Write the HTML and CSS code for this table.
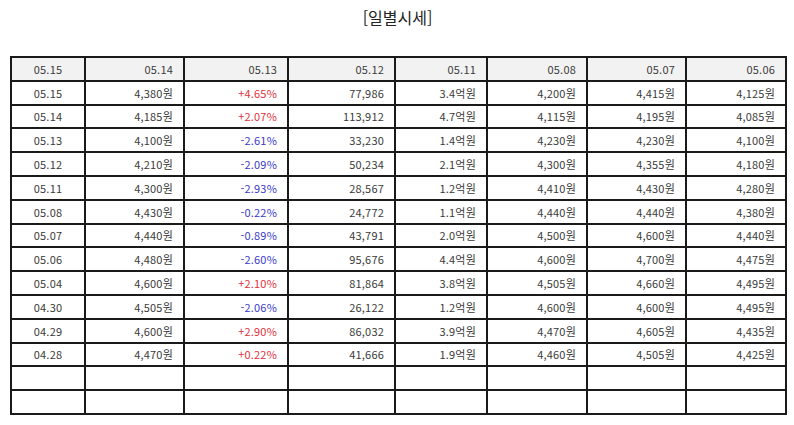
FILE: index.html
```html
<!DOCTYPE html>
<html lang="ko">
<head>
<meta charset="utf-8">
<link rel="stylesheet" href="styles.css">
</head>
<body>
<div class="page">
  <h1 class="title">[일별시세]</h1>
  <table class="grid">
    <colgroup>
      <col class="c1"><col class="c2"><col class="c3"><col class="c4"><col class="c5"><col class="c6"><col class="c7"><col class="c8">
    </colgroup>
    <thead>
      <tr><th class="date">05.15</th><th>05.14</th><th>05.13</th><th>05.12</th><th>05.11</th><th>05.08</th><th>05.07</th><th>05.06</th></tr>
    </thead>
    <tbody>
      <tr><td class="date">05.15</td><td>4,380원</td><td class="up">+4.65%</td><td>77,986</td><td>3.4억원</td><td>4,200원</td><td>4,415원</td><td>4,125원</td></tr>
      <tr><td class="date">05.14</td><td>4,185원</td><td class="up">+2.07%</td><td>113,912</td><td>4.7억원</td><td>4,115원</td><td>4,195원</td><td>4,085원</td></tr>
      <tr><td class="date">05.13</td><td>4,100원</td><td class="down">-2.61%</td><td>33,230</td><td>1.4억원</td><td>4,230원</td><td>4,230원</td><td>4,100원</td></tr>
      <tr><td class="date">05.12</td><td>4,210원</td><td class="down">-2.09%</td><td>50,234</td><td>2.1억원</td><td>4,300원</td><td>4,355원</td><td>4,180원</td></tr>
      <tr><td class="date">05.11</td><td>4,300원</td><td class="down">-2.93%</td><td>28,567</td><td>1.2억원</td><td>4,410원</td><td>4,430원</td><td>4,280원</td></tr>
      <tr><td class="date">05.08</td><td>4,430원</td><td class="down">-0.22%</td><td>24,772</td><td>1.1억원</td><td>4,440원</td><td>4,440원</td><td>4,380원</td></tr>
      <tr><td class="date">05.07</td><td>4,440원</td><td class="down">-0.89%</td><td>43,791</td><td>2.0억원</td><td>4,500원</td><td>4,600원</td><td>4,440원</td></tr>
      <tr><td class="date">05.06</td><td>4,480원</td><td class="down">-2.60%</td><td>95,676</td><td>4.4억원</td><td>4,600원</td><td>4,700원</td><td>4,475원</td></tr>
      <tr><td class="date">05.04</td><td>4,600원</td><td class="up">+2.10%</td><td>81,864</td><td>3.8억원</td><td>4,505원</td><td>4,660원</td><td>4,495원</td></tr>
      <tr><td class="date">04.30</td><td>4,505원</td><td class="down">-2.06%</td><td>26,122</td><td>1.2억원</td><td>4,600원</td><td>4,600원</td><td>4,495원</td></tr>
      <tr><td class="date">04.29</td><td>4,600원</td><td class="up">+2.90%</td><td>86,032</td><td>3.9억원</td><td>4,470원</td><td>4,605원</td><td>4,435원</td></tr>
      <tr><td class="date">04.28</td><td>4,470원</td><td class="up">+0.22%</td><td>41,666</td><td>1.9억원</td><td>4,460원</td><td>4,505원</td><td>4,425원</td></tr>
      <tr class="empty"><td></td><td></td><td></td><td></td><td></td><td></td><td></td><td></td></tr>
      <tr class="empty"><td></td><td></td><td></td><td></td><td></td><td></td><td></td><td></td></tr>
    </tbody>
  </table>
</div>
</body>
</html>
```

FILE: styles.css
```css
html, body {
  margin: 0;
  padding: 0;
  background: #fff;
}
.page {
  padding: 0 9px 0 10px;
  font-family: "Noto Sans CJK KR", "Noto Sans", sans-serif;
  color: #333;
}
.title {
  margin: 0;
  height: 56px;
  padding-top: 5px;
  box-sizing: border-box;
  text-align: center;
  font-size: 16px;
  font-weight: normal;
  line-height: 24px;
  color: #222;
}
.grid {
  width: 775px;
  border-collapse: collapse;
  table-layout: fixed;
  border: 2px solid #1a1a1a;
}
.c1 { width: 74px; }
.c2 { width: 99px; }
.c3 { width: 104px; }
.c4 { width: 107px; }
.c5 { width: 92px; }
.c6 { width: 100px; }
.c7 { width: 99px; }
.c8 { width: 100px; }
.grid th,
.grid td {
  border: 2px solid #1a1a1a;
  height: 21.8px;
  padding: 0 10px 0 0;
  font-size: 11px;
  font-weight: normal;
  text-align: right;
  line-height: 20px;
  letter-spacing: 0.2px;
  color: #3a3a3a;
  white-space: nowrap;
}
.grid th {
  background: #f2f2f2;
}
.grid .date {
  text-align: center;
  padding: 0;
}
.grid .up { color: #e3303a; }
.grid .down { color: #3a3ac8; }
```
